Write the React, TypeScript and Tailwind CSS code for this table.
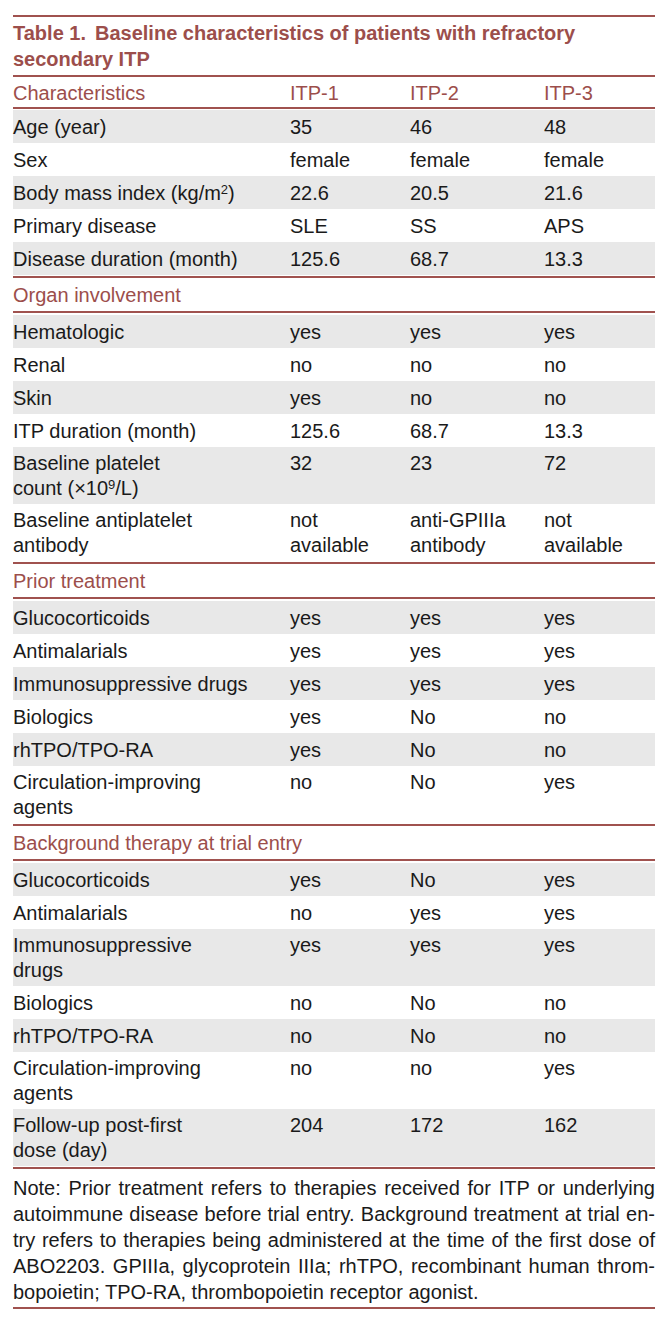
import React from 'react';

// label, ITP-1, ITP-2, ITP-3, wraps onto two lines
type Row = [React.ReactNode, React.ReactNode, React.ReactNode, React.ReactNode, boolean?];

interface Section {
  title?: string;
  rows: Row[];
}

const sections: Section[] = [
  {
    rows: [
      ['Age (year)', '35', '46', '48'],
      ['Sex', 'female', 'female', 'female'],
      [
        <>
          Body mass index (kg/m<sup className="text-[13px]">2</sup>)
        </>,
        '22.6',
        '20.5',
        '21.6',
      ],
      ['Primary disease', 'SLE', 'SS', 'APS'],
      ['Disease duration (month)', '125.6', '68.7', '13.3'],
    ],
  },
  {
    title: 'Organ involvement',
    rows: [
      ['Hematologic', 'yes', 'yes', 'yes'],
      ['Renal', 'no', 'no', 'no'],
      ['Skin', 'yes', 'no', 'no'],
      ['ITP duration (month)', '125.6', '68.7', '13.3'],
      [
        <>
          Baseline platelet
          <br />
          count (×10<sup className="text-[13px]">9</sup>/L)
        </>,
        '32',
        '23',
        '72',
        true,
      ],
      [
        <>
          Baseline antiplatelet
          <br />
          antibody
        </>,
        <>
          not
          <br />
          available
        </>,
        <>
          anti-GPIIIa
          <br />
          antibody
        </>,
        <>
          not
          <br />
          available
        </>,
        true,
      ],
    ],
  },
  {
    title: 'Prior treatment',
    rows: [
      ['Glucocorticoids', 'yes', 'yes', 'yes'],
      ['Antimalarials', 'yes', 'yes', 'yes'],
      ['Immunosuppressive drugs', 'yes', 'yes', 'yes'],
      ['Biologics', 'yes', 'No', 'no'],
      ['rhTPO/TPO-RA', 'yes', 'No', 'no'],
      [
        <>
          Circulation-improving
          <br />
          agents
        </>,
        'no',
        'No',
        'yes',
        true,
      ],
    ],
  },
  {
    title: 'Background therapy at trial entry',
    rows: [
      ['Glucocorticoids', 'yes', 'No', 'yes'],
      ['Antimalarials', 'no', 'yes', 'yes'],
      [
        <>
          Immunosuppressive
          <br />
          drugs
        </>,
        'yes',
        'yes',
        'yes',
        true,
      ],
      ['Biologics', 'no', 'No', 'no'],
      ['rhTPO/TPO-RA', 'no', 'No', 'no'],
      [
        <>
          Circulation-improving
          <br />
          agents
        </>,
        'no',
        'no',
        'yes',
        true,
      ],
      [
        <>
          Follow-up post-first
          <br />
          dose (day)
        </>,
        '204',
        '172',
        '162',
        true,
      ],
    ],
  },
];

const noteLines = [
  'Note: Prior treatment refers to therapies received for ITP or underlying',
  'autoimmune disease before trial entry. Background treatment at trial en-',
  'try refers to therapies being administered at the time of the first dose of',
  'ABO2203. GPIIIa, glycoprotein IIIa; rhTPO, recombinant human throm-',
];

function DataRow({ row, shaded }: { row: Row; shaded: boolean }) {
  const tall = row[4];
  return (
    <div
      className={`grid grid-cols-[277px_120px_134px_1fr] pt-[4px] pb-[3px] ${tall ? 'leading-[25px]' : 'leading-[26px]'} ${
        shaded ? 'bg-[#e8e8e8]' : ''
      }`}
    >
      {row.slice(0, 4).map((c, i) => (
        <div key={i}>{c}</div>
      ))}
    </div>
  );
}

export default function App() {
  return (
    <div className="min-h-[1326px] bg-white px-[13px] pt-[15px] font-['Liberation_Sans',Arial,sans-serif] text-[20px] text-[#1a1a1a]">
      <div className="border-t-2 border-[#a0524f]">
        {/* caption */}
        <div className="border-b-2 border-[#a0524f] pt-[3px] pb-[3px] text-[20px] font-bold leading-[26px] text-[#9c4e4b]">
          Table 1.<span className="ml-[9px]">Baseline characteristics of patients with refractory</span>
          <br />
          secondary ITP
        </div>

        {/* column header */}
        <div className="grid grid-cols-[277px_120px_134px_1fr] border-b-2 border-[#a0524f] pt-[3px] pb-[1px] leading-[26px] text-[#9c4e4b]">
          <div>Characteristics</div>
          <div>ITP-1</div>
          <div>ITP-2</div>
          <div>ITP-3</div>
        </div>

        {sections.map((s, si) => (
          <div key={si}>
            {s.title && (
              <div className="border-b-2 border-[#a0524f] pt-[4px] pb-[3px] leading-[26px] text-[#9c4e4b]">
                {s.title}
              </div>
            )}
            <div className={si === 0 ? 'border-b-2 border-[#a0524f] pt-[1px] pb-[1px]' : 'border-b-2 border-[#a0524f] pt-[2px] pb-[1px]'}>
              {s.rows.map((r, ri) => (
                <DataRow key={ri} row={r} shaded={ri % 2 === 0} />
              ))}
            </div>
          </div>
        ))}

        {/* footnote */}
        <div className="border-b-2 border-[#a0524f] pt-[6px] pb-[2px] leading-[26px]">
          {noteLines.map((line, i) => (
            <div key={i} className="text-justify [text-align-last:justify]">
              {line}
            </div>
          ))}
          <div>bopoietin; TPO-RA, thrombopoietin receptor agonist.</div>
        </div>
      </div>
    </div>
  );
}
